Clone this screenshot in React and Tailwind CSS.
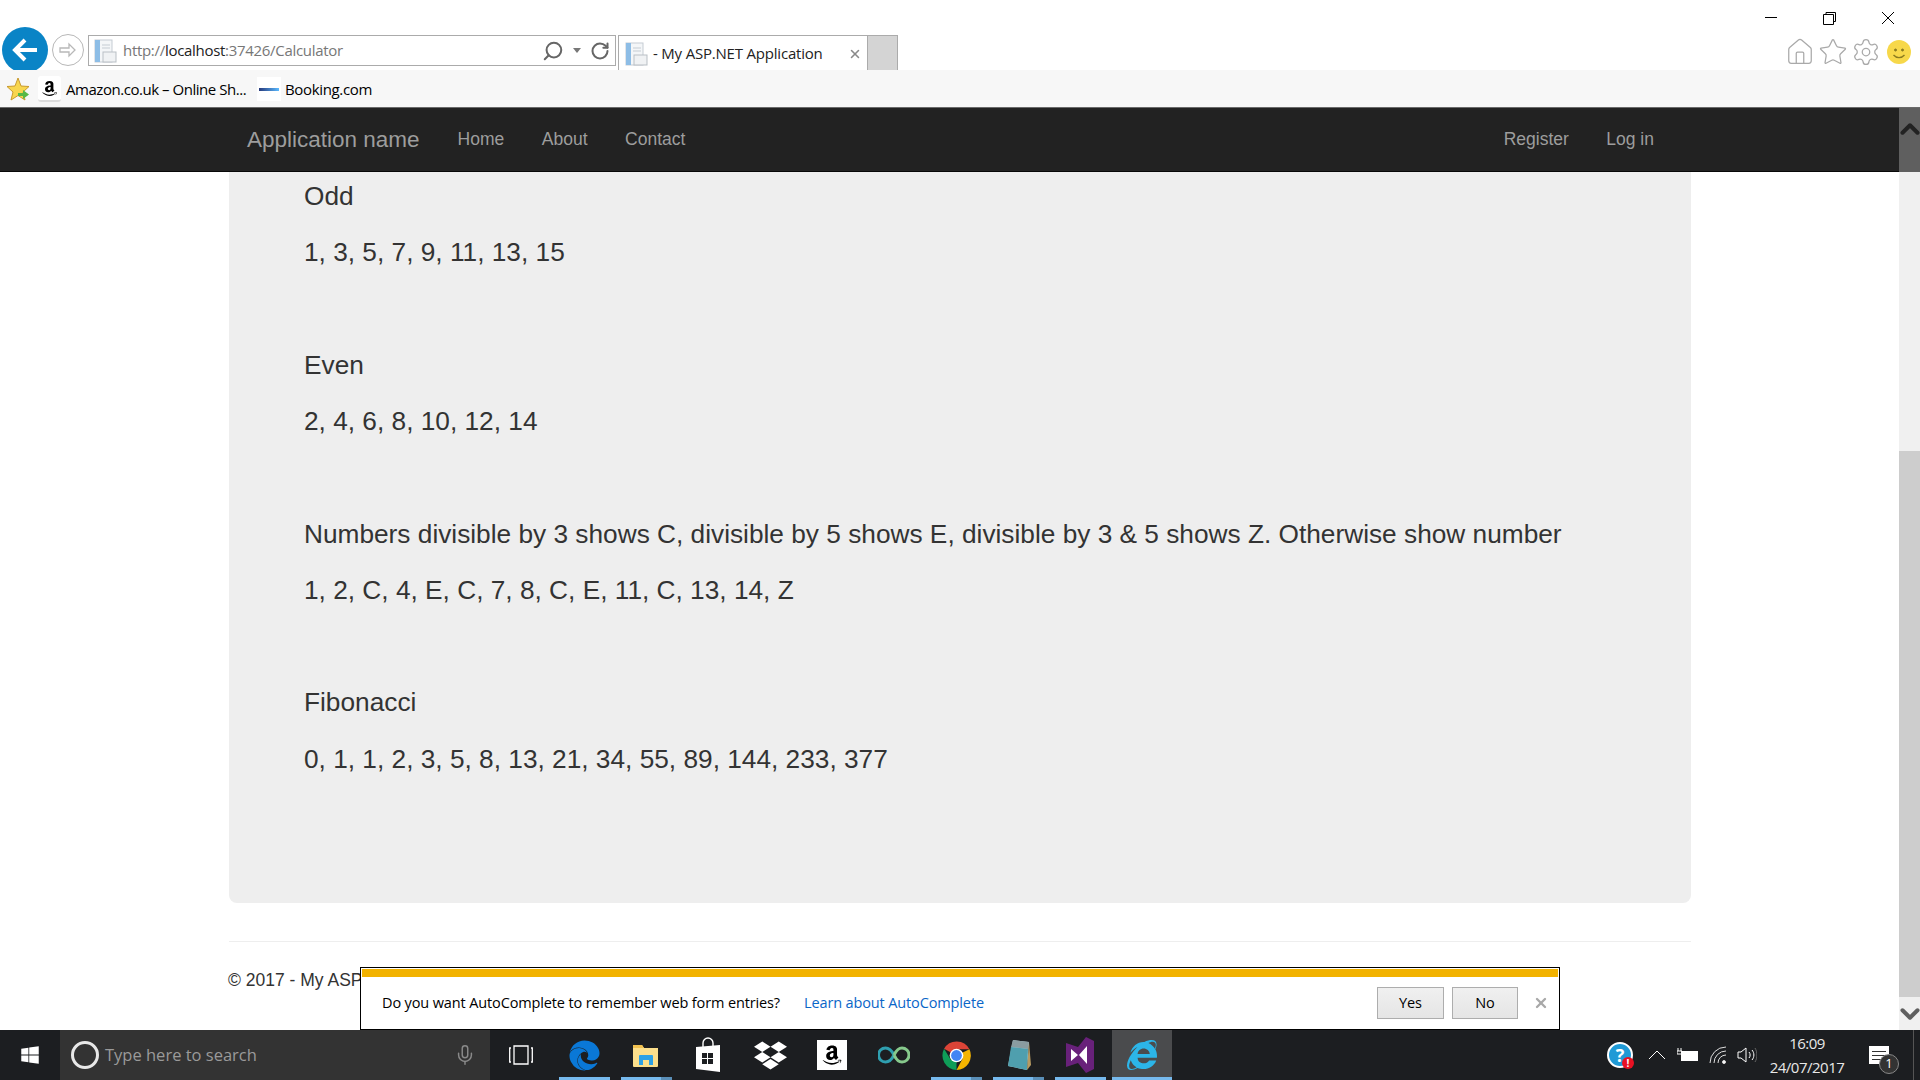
import React from 'react';
import { ChevronUp, ChevronDown, RotateCw, Search, X, Mic, Home, Star, Settings } from 'lucide-react';
import { FaAmazon, FaDropbox, FaEdge, FaInternetExplorer, FaWindows } from 'react-icons/fa';

const uiFont = 'font-["Open_Sans",sans-serif]';

const results = [
    { title: 'Odd', values: '1, 3, 5, 7, 9, 11, 13, 15' },
    { title: 'Even', values: '2, 4, 6, 8, 10, 12, 14' },
    { title: 'Numbers divisible by 3 shows C, divisible by 5 shows E, divisible by 3 & 5 shows Z. Otherwise show number', values: '1, 2, C, 4, E, C, 7, 8, C, E, 11, C, 13, 14, Z' },
    { title: 'Fibonacci', values: '0, 1, 1, 2, 3, 5, 8, 13, 21, 34, 55, 89, 144, 233, 377' },
];

const PageIcon = () => (
    <svg width="24" height="26" viewBox="0 0 24 26" className="shrink-0">
        <rect x="1" y="2" width="17" height="22" fill="#f4f6f8" stroke="#c5ccd3" />
        <rect x="1" y="2" width="5" height="22" fill="#8dbde6" />
        <rect x="9" y="14" width="13" height="10" fill="#f0f2f4" stroke="#b9bfc5" />
        <path d="M8 7h8M8 10h8" stroke="#c5ccd3" />
    </svg>
);

const ChromeIcon = () => (
    <svg width="29" height="29" viewBox="0 0 28 28">
        <path d="M14 14 L2 7.500 A14 14 0 0 1 26.500 8 L14 8 Z" fill="#db4437" />
        <path d="M14 14 L14 28 A14 14 0 0 1 2 7.500 L8.500 18 Z" fill="#0f9d58" />
        <path d="M14 14 L26.500 8 A14 14 0 0 1 14 28 L20 17 Z" fill="#f4b400" />
        <circle cx="14" cy="14" r="6.600" fill="#fff" />
        <circle cx="14" cy="14" r="5.200" fill="#4285f4" />
    </svg>
);

const ExplorerIcon = () => (
    <svg width="28" height="28" viewBox="0 0 28 28">
        <path d="M1 5a1 1 0 0 1 1-1h8l2 3h14v18a1 1 0 0 1-1 1H2a1 1 0 0 1-1-1z" fill="#fcdf8b" />
        <path d="M1 4h9l2 3H1z" fill="#f1c14f" />
        <path d="M7 24v-9a1 1 0 0 1 1-1h12a1 1 0 0 1 1 1v9h-4v-5h-6v5z" fill="#2da1e6" />
    </svg>
);

const StoreIcon = () => (
    <svg width="28" height="36" viewBox="0 0 28 36">
        <path d="M9 10V6a5 5 0 0 1 10 0v4" fill="none" stroke="#fff" strokeWidth="1.400" />
        <path d="M2 10l24-2v27l-24-3z" fill="#fff" />
        <path d="M8 16h5v5H8zM14 16h5v5h-5zM8 22h5v5H8zM14 22h5v5h-5z" fill="#1d1f22" />
    </svg>
);

const InfinityIcon = () => (
    <svg width="32" height="18" viewBox="0 0 32 18" fill="none" strokeWidth="3">
        <path d="M16 9C13 3 10 2 7.500 2a7 7 0 0 0 0 14C10 16 13 15 16 9" stroke="#2f9fb0" />
        <path d="M16 9c3-6 5-7 8-7a7 7 0 0 1 0 14c-3 0-5-1-8-7" stroke="#86c98c" />
    </svg>
);

const NotepadIcon = () => (
    <svg width="28" height="34" viewBox="0 0 28 34">
        <path d="M9 2l16 2-2 28-19-4z" fill="#b9d3d8" />
        <path d="M9 2l16 2-1 7-17-2z" fill="#8a9ca0" />
        <path d="M7 9l17 2-1 21-19-4z" fill="#4f9fae" />
        <path d="M25 4l2 23-4 5z" fill="#b79b62" />
    </svg>
);

const VisualStudioIcon = () => (
    <svg width="28" height="36" viewBox="0 0 28 36">
        <path d="M0 6l12 4 8-10 8 4v28l-8 4-8-10-12 4z" fill="#68217a" />
        <path d="M5 12l7 6-7 6zM21 9v18l-8-9z" fill="#fff" />
    </svg>
);

const taskbarApps = [
    { key: 'edge', icon: <FaEdge className="text-[31px] text-[#0a78d7]" />, bar: 'open' },
    { key: 'explorer', icon: <ExplorerIcon />, bar: 'stack' },
    { key: 'store', icon: <StoreIcon /> },
    { key: 'dropbox', icon: <FaDropbox className="text-[33px] text-white" /> },
    { key: 'amazon', icon: <div className="w-[30px] h-[30px] bg-white flex items-center justify-center"><FaAmazon className="text-[22px] text-black" /></div> },
    { key: 'infinity', icon: <InfinityIcon /> },
    { key: 'chrome', icon: <ChromeIcon />, bar: 'stack' },
    { key: 'notepad', icon: <NotepadIcon />, bar: 'stack' },
    { key: 'vs', icon: <VisualStudioIcon />, bar: 'open' },
    { key: 'ie', icon: <FaInternetExplorer className="text-[30px] text-[#2cb5e8]" />, bar: 'active' },
];

const TaskbarApp = ({ icon, bar }) => (
    <div className={`relative h-full flex items-center justify-center ${bar === 'active' ? 'w-[60px] ml-[1px] bg-[#4a4b4d]' : 'w-[62px]'}`}>
        {icon}
        {bar === 'open' && <div className="absolute bottom-0 left-[6px] w-[51px] h-[3px] bg-[#76b9ed]" />}
        {bar === 'active' && <div className="absolute bottom-0 left-0 w-full h-[3px] bg-[#76b9ed]" />}
        {bar === 'stack' && (
            <div className="absolute bottom-0 left-[6px] w-[51px] h-[3px] flex">
                <div className="flex-1 bg-[#76b9ed]" />
                <div className="w-[11px] bg-[#5a8fb8]" />
            </div>
        )}
    </div>
);

const AddressBar = () => (
    <div className="w-[528px] h-[31px] ml-[4px] border border-[#ababab] bg-white flex items-center pl-[5px] pr-[5px]">
        <PageIcon />
        <span className={`ml-[5px] text-[15px] tracking-[-0.3px] text-[#777] ${uiFont}`}>
            http://<span className="text-[#222]">localhost</span>:37426/Calculator
        </span>
        <div className="ml-auto flex items-center">
            <Search size={22} strokeWidth={2.2} className="text-[#666] -scale-x-100" />
            <div className="ml-[9px] w-0 h-0 border-x-[4px] border-x-transparent border-t-[5px] border-t-[#777]" />
            <RotateCw size={20} strokeWidth={2.4} className="ml-[9px] text-[#666]" />
        </div>
    </div>
);

const BrowserChrome = () => (
    <div className="bg-white">
        <div className="h-[70px] flex">
            <div className="flex-1 flex items-start overflow-hidden pl-[2px] pt-[27px]">
                <div className="w-[46px] h-[46px] shrink-0 rounded-full bg-[#0a84c6] flex items-center justify-center text-white">
                    <svg width="26" height="26" viewBox="0 0 26 26" fill="none" stroke="currentColor" strokeWidth="4">
                        <path d="M25 13H4M13 3L3 13l10 10" />
                    </svg>
                </div>
                <div className="w-[32px] h-[32px] ml-[4px] mt-[7px] shrink-0 rounded-full border border-[#b8b8b8] flex items-center justify-center">
                    <svg width="20" height="20" viewBox="0 0 20 20" fill="none" stroke="#b8b8b8" strokeWidth="1.300">
                        <path d="M2 8h9V4l6 6-6 6v-4H2z" />
                    </svg>
                </div>
                <div className="mt-[8px]"><AddressBar /></div>
                <div className="w-[250px] h-[36px] ml-[2px] mt-[8px] border border-[#ababab] border-b-0 flex items-center pl-[6px] shrink-0">
                    <PageIcon />
                    <span className={`ml-[4px] text-[15px] tracking-[-0.2px] text-[#222] ${uiFont}`}>- My ASP.NET Application</span>
                    <X size={14} strokeWidth={2.6} className="ml-auto mr-[5px] text-[#8a8a8a]" />
                </div>
                <div className="w-[30px] h-[36px] mt-[8px] bg-[#d4d4d4] border-y border-r border-[#ababab] shrink-0" />
            </div>
            <div className="w-[160px] shrink-0 flex flex-col pr-[9px]">
                <div className="h-[36px] flex items-center justify-end text-black mr-[17px]">
                    <svg width="130" height="14" viewBox="0 0 130 14" fill="none" stroke="currentColor">
                        <path d="M1 6.500h12M59.500 3.500h10v10h-10zM62 3.500V1.500h9.500v9H69.500M118 1l12 12M130 1l-12 12" />
                    </svg>
                </div>
                <div className="flex items-center justify-end gap-[3px] text-[#a9a9a9] mt-[1px]">
                    <Home size={30} strokeWidth={1} />
                    <Star size={30} strokeWidth={1} />
                    <Settings size={30} strokeWidth={1} />
                    <div className="w-[24px] h-[24px] ml-[3px] rounded-full bg-[#f7d84a] flex items-center justify-center shrink-0">
                        <svg width="24" height="24" viewBox="0 0 24 24" fill="none" stroke="#8a7a20">
                            <circle cx="8.500" cy="10" r="1" fill="#8a7a20" />
                            <circle cx="15.500" cy="10" r="1" fill="#8a7a20" />
                            <path d="M6.500 15c3 3.500 8 3.500 11 0" strokeWidth="1.300" />
                        </svg>
                    </div>
                </div>
            </div>
        </div>
        <div className={`h-[37px] bg-[#f7f7f7] flex items-center pl-[7px] pt-px text-[15px] tracking-[-0.35px] text-black ${uiFont}`}>
            <svg width="24" height="24" viewBox="0 0 24 24">
                <path d="M11 1l3 8 8 .5-6 5.500 2 8-7-4.500L4 23l2-8-6-5.500 8-.5z" fill="#f8d64e" stroke="#c99a2e" />
                <path d="M11 16h5v-3l6 4.500-6 4.500v-3h-5z" fill="#58b947" />
            </svg>
            <div className="ml-[7px] w-[23px] h-[26px] bg-white border-b-2 border-[#ddd] rounded-[3px] flex items-center justify-center">
                <FaAmazon className="text-[17px] text-black" />
            </div>
            <span className="ml-[5px] w-[191px] whitespace-nowrap tracking-[-0.46px]">Amazon.co.uk – Online Sh...</span>
            <div className="w-[24px] h-[24px] bg-white flex items-center justify-center">
                <div className="w-[20px] h-[3px] bg-gradient-to-r from-[#273b7d] to-[#5bbaff]" />
            </div>
            <span className="ml-[4px]">Booking.com</span>
        </div>
        <div className="h-px bg-[#6a6a6a]" />
    </div>
);

const Navbar = () => (
    <nav className="h-[64px] shrink-0 bg-[#222] border-b border-[#080808] flex items-center pl-[247px] pr-[245px] text-[17.5px] text-[#9d9d9d] font-['Liberation_Sans',sans-serif]">
        <a className="text-[22.5px] mr-[38px]">Application name</a>
        <ul className="flex gap-[37.5px]">
            <li>Home</li>
            <li>About</li>
            <li>Contact</li>
        </ul>
        <ul className="flex gap-[37.5px] ml-auto">
            <li>Register</li>
            <li>Log in</li>
        </ul>
    </nav>
);

const AutoCompleteBar = () => (
    <div className={`absolute left-[360px] bottom-0 w-[1200px] h-[63px] bg-white border border-black flex flex-col ${uiFont}`}>
        <div className="h-[8px] mt-px mx-px bg-[#f2b200]" />
        <div className="flex-1 flex items-center pl-[21px] pb-px text-[14.5px] tracking-[-0.13px] text-black">
            <span>Do you want AutoComplete to remember web form entries?</span>
            <a className="ml-[24px] text-[#0a66c8]">Learn about AutoComplete</a>
            <button className="ml-auto w-[67px] h-[32px] border border-[#adadad] bg-gradient-to-b from-[#f0f0f0] to-[#e5e5e5]">Yes</button>
            <button className="ml-[8px] w-[66px] h-[32px] border border-[#adadad] bg-gradient-to-b from-[#f0f0f0] to-[#e5e5e5]">No</button>
            <X size={16} strokeWidth={3.5} className="ml-[15px] mr-[10px] text-[#a8a8a8]" />
        </div>
    </div>
);

const Scrollbar = () => (
    <div className="w-[21px] shrink-0 flex flex-col bg-[#f0f0f0]">
        <div className="h-[64px] bg-[#5f5f5f] flex justify-center pt-[6px]">
            <ChevronUp size={30} strokeWidth={3.2} className="shrink-0 text-[#222]" />
        </div>
        <div className="h-[279px]" />
        <div className="flex-1 bg-[#cdcdcd]" />
        <div className="h-[33px] flex items-center justify-center">
            <ChevronDown size={30} strokeWidth={3.2} className="shrink-0 text-[#5f5f5f]" />
        </div>
    </div>
);

const Taskbar = () => (
    <div className={`h-[50px] shrink-0 bg-[#1c1e21] flex items-center text-white ${uiFont}`}>
        <div className="w-[60px] flex justify-center">
            <FaWindows className="text-[20px]" />
        </div>
        <div className="w-[430px] h-full bg-[#333] flex items-center pl-[11px] pr-[14px]">
            <div className="w-[28px] h-[28px] rounded-full border-[3px] border-[#e8e8e8]" />
            <span className="ml-[6px] text-[16.5px] text-[#9a9a9a]">Type here to search</span>
            <Mic size={22} strokeWidth={1.6} className="ml-auto text-[#8a8a8a]" />
        </div>
        <div className="w-[63px] pr-[2px] flex justify-center">
            <svg width="24" height="20" viewBox="0 0 24 20" fill="none" stroke="#fff" strokeWidth="1.300">
                <path d="M5 1h14v18H5zM2 3H0.700v14H2M22 3h1.300v14H22" />
            </svg>
        </div>
        <div className="flex h-full">
            {taskbarApps.map((app) => (
                <TaskbarApp key={app.key} icon={app.icon} bar={app.bar} />
            ))}
        </div>
        <div className="ml-auto flex items-center h-full">
            <div className="relative w-[26px] h-[26px] rounded-full bg-[#1f9ad6] border-2 border-white flex items-center justify-center text-[18px] font-bold leading-none">
                ?
                <div className="absolute -right-[3px] -bottom-[3px] w-[12px] h-[12px] rounded-full bg-[#e81123] text-[10px] flex items-center justify-center">!</div>
            </div>
            <svg width="18" height="10" viewBox="0 0 18 10" fill="none" stroke="#fff" className="ml-[15px]">
                <path d="M1 9l8-8 8 8" />
            </svg>
            <svg width="22" height="14" viewBox="0 0 22 14" className="ml-[11px]">
                <rect x="4" y="3" width="17" height="10" fill="#fff" />
                <path d="M1 0v3M4 0v3M0 3h5v3H0z" stroke="#fff" fill="none" />
            </svg>
            <svg width="20" height="18" viewBox="0 0 20 18" fill="none" stroke="#ddd" className="ml-[10px]">
                <path d="M1 17A16 16 0 0 1 17 1M5 17A12 12 0 0 1 17 5M9 17a8 8 0 0 1 8-8" />
                <circle cx="15" cy="16" r="1.500" fill="#fff" />
            </svg>
            <svg width="20" height="16" viewBox="0 0 20 16" fill="none" stroke="#fff" className="ml-[8px]">
                <path d="M1 5h3l5-4v14l-5-4H1zM12 5c1.500 1.500 1.500 4.500 0 6M15 3c2.500 3 2.500 7 0 10" />
                <path d="M18 1c2.500 4 2.500 10 0 14" stroke="#666" />
            </svg>
            <div className="w-[94px] ml-[3px] text-center text-[15px] leading-[24px] tracking-[-0.5px] text-[#e8e8e8]">
                <div>16:09</div>
                <div>24/07/2017</div>
            </div>
            <div className="relative w-[20px] h-[18px] ml-[15px] mr-[24px] bg-white flex flex-col justify-center gap-[3px] px-[3px]">
                <div className="h-px bg-[#333]" />
                <div className="h-px bg-[#333]" />
                <div className="h-px bg-[#333]" />
                <div className="absolute -right-[10px] -bottom-[10px] w-[20px] h-[20px] rounded-full bg-[#333] border border-[#888] text-[13px] flex items-center justify-center">1</div>
            </div>
            <div className="w-px h-full mr-[6px] bg-[#555]" />
        </div>
    </div>
);

export default function App() {
    return (
        <div className="w-[1920px] h-[1080px] overflow-hidden flex flex-col bg-white">
            <BrowserChrome />

            <div className="relative flex-1 flex min-h-0">
                <div className="flex-1 flex flex-col min-w-0 font-['Liberation_Sans',sans-serif] text-[#333]">
                    <Navbar />

                    {/* Contenido */}
                    <main className="flex-1 overflow-hidden pl-[229px] pr-[208px]">
                        <div className="h-[731px] bg-[#eee] rounded-b-[8px] px-[75px] pt-[6px] text-[26.25px] leading-[37.5px]">
                            {results.map((row) => (
                                <div key={row.title} className="pb-[56.25px]">
                                    <p className="mb-[18.75px]">{row.title}</p>
                                    <p className="mb-[18.75px]">{row.values}</p>
                                </div>
                            ))}
                        </div>
                        <div className="mt-[38px] border-t border-[#eee]" />
                        <footer className="mt-[26px] -ml-px text-[17.5px] leading-[25px]">© 2017 - My ASP.NET Application</footer>
                    </main>
                </div>
                <Scrollbar />
                <AutoCompleteBar />
            </div>

            <Taskbar />
        </div>
    );
}
